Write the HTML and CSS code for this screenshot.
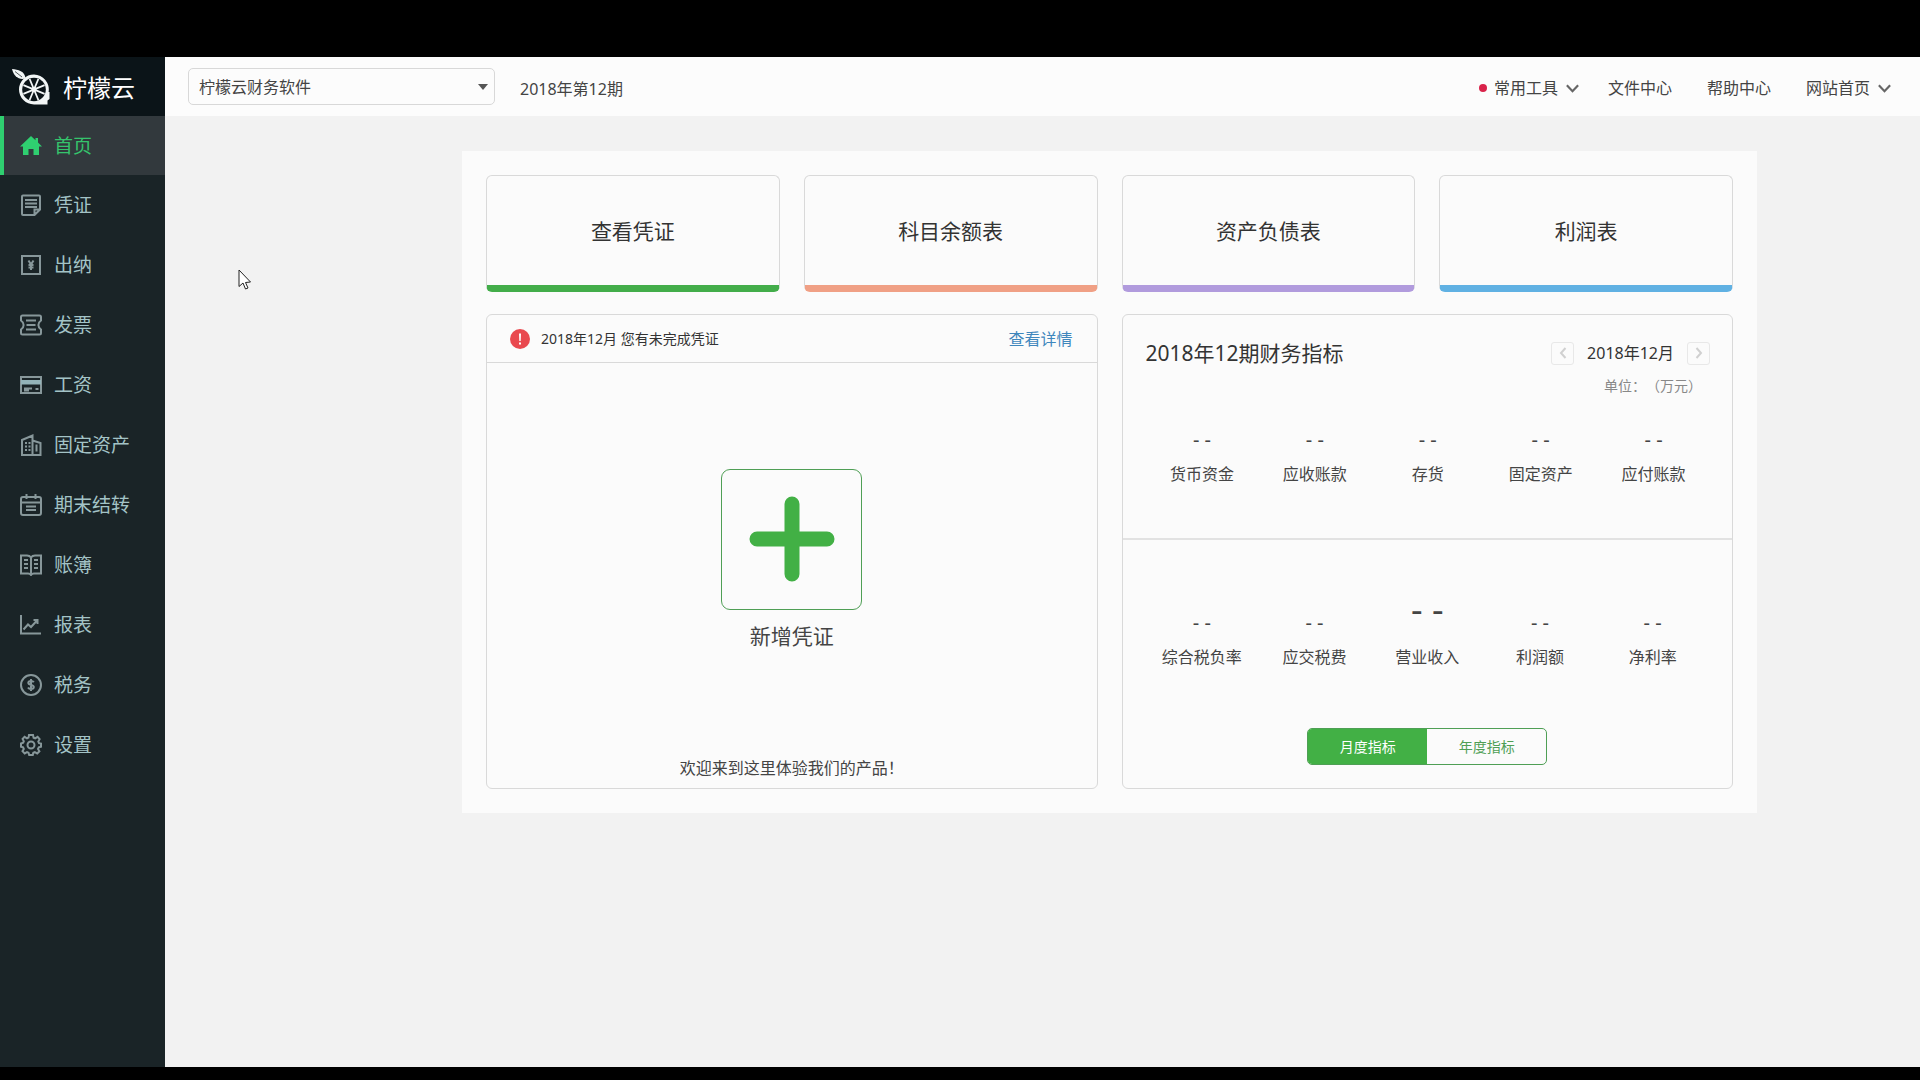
FILE: index.html
```
<!DOCTYPE html>
<html lang="zh-CN">
<head>
<meta charset="utf-8">
<title>柠檬云财务软件</title>
<link rel="stylesheet" href="styles.css">
</head>
<body>
<div class="app">
  <aside class="sidebar">
    <a class="brand" href="#">
      <svg class="brand-logo" viewBox="0 0 38 38" aria-hidden="true">
        <path fill="#f2f6f6" d="M0 0C6 .5 13 2 13.500 9.500 7 11.500 1.500 7 0 0Z"/>
        <path fill="none" stroke="#0b1418" stroke-width=".7" d="M3 2.500 10 8"/>
        <path fill="#f2f6f6" d="M22 5.500a15 15 0 0 1 14.600 17.500l.9 0V30l-2 1.500V35.500H22a15 15 0 0 1 0-30Z"/>
        <circle cx="22" cy="20.500" r="11.800" fill="#0b1418"/>
        <g stroke="#f2f6f6" stroke-width="1.700">
          <path d="M11.400 16.100 32.600 24.900M17.600 9.900 26.400 31.100M26.400 9.900 17.600 31.100M32.600 16.100 11.400 24.900"/>
        </g>
        <circle cx="22" cy="20.500" r="2.500" fill="#f2f6f6"/>
      </svg>
      <span>柠檬云</span>
    </a>
    <nav class="menu">
      <a class="menu-item active" href="#">
        <svg viewBox="0 0 22 22"><path fill="currentColor" d="M11 1 0 11.500h3V20h5.500v-6h5v6H19v-8.500h3L18 7.600V3h-2.500v2.300Z"/></svg>
        <span>首页</span>
      </a>
      <a class="menu-item" href="#">
        <svg viewBox="0 0 22 22"><path d="M3 1.500h16c.6 0 1 .4 1 1v13L14.500 21H3c-.6 0-1-.4-1-1V2.500c0-.6.4-1 1-1ZM20 15.500h-5.500V21M5 6h12M5 9.500h12M5 13h12"/></svg>
        <span>凭证</span>
      </a>
      <a class="menu-item" href="#">
        <svg viewBox="0 0 22 22"><path d="M2 2h18v18H2ZM8.500 6.500 11 10.500l2.500-4M11 10.500V16M8.500 11h5M8.500 13.500h5"/></svg>
        <span>出纳</span>
      </a>
      <a class="menu-item" href="#">
        <svg viewBox="0 0 22 22"><path d="M2.500 1.500h17c1 0 1.500.5 1.500 1.500v3.500c-3.500 2.500-3.500 6.500 0 9V19c0 1-.5 1.500-1.500 1.500h-17C1.500 20.500 1 20 1 19v-3.500c3.500-2.500 3.500-6.500 0-9V3c0-1 .5-1.500 1.500-1.500ZM6 6.500h10M6.500 11h9M6 15.500h10"/></svg>
        <span>发票</span>
      </a>
      <a class="menu-item" href="#">
        <svg viewBox="0 0 22 22"><path d="M1 3h20v16H1ZM4 14.500h8M4 16.500h5M15.500 15h3"/><path fill="currentColor" stroke="none" d="M1 6h20v4.500H1Z"/></svg>
        <span>工资</span>
      </a>
      <a class="menu-item" href="#">
        <svg viewBox="0 0 22 22"><path d="M2 21V6l10.500-4.500V21ZM12.500 6.500 20.500 9v12h-8.500M5 9h2M5 12.500h2M5 16h2M8.500 9h2M8.500 12.500h2M8.500 16h2M16.500 10.500v7"/></svg>
        <span>固定资产</span>
      </a>
      <a class="menu-item" href="#">
        <svg viewBox="0 0 22 22"><path d="M3 3h16c1 0 2 .8 2 2v14c0 1.200-1 2-2 2H3c-1 0-2-.8-2-2V5c0-1.200 1-2 2-2ZM1 8.500h20M6.500 0v5M15.500 0v5M6 12.500h10M6 16h10"/></svg>
        <span>期末结转</span>
      </a>
      <a class="menu-item" href="#">
        <svg viewBox="0 0 22 22"><path d="M11 3.500C10 2 9 1.500 7 1.500H1v18h7c1.500 0 2.500.5 3 1.500.5-1 1.500-1.500 3-1.500h7v-18h-6c-2 0-3 .5-4 2ZM11 3.500V21M4 6h4M4 10h4M4 14h4M14 6h4M14 10h4M14 14h4"/></svg>
        <span>账簿</span>
      </a>
      <a class="menu-item" href="#">
        <svg viewBox="0 0 22 22"><path d="M1 1v18.500h20M3.500 15.500 8 10.500l3 2.500 6-6.500M13.500 6H17.500V10"/></svg>
        <span>报表</span>
      </a>
      <a class="menu-item" href="#">
        <svg viewBox="0 0 22 22"><circle cx="11" cy="11" r="10"/><path stroke-width="2" d="M13.800 8.200c-.6-1-1.500-1.300-2.800-1.300-1.600 0-2.700.7-2.700 1.900 0 2.900 5.500 1.300 5.500 4.300 0 1.300-1.200 2-2.800 2-1.400 0-2.400-.5-3-1.500M11 5v12"/></svg>
        <span>税务</span>
      </a>
      <a class="menu-item" href="#">
        <svg viewBox="0 0 22 22"><circle cx="11" cy="11" r="3.500"/><path d="M9 1h4l.6 2.700 1.600.7 2.400-1.500 2 2.200-1.300 2.500.7 1.600L21 9.500v3.200l-2.200.6-.8 1.700 1.400 2.300-2.200 2.200-2.400-1.300-1.500.6L12.800 21H9.200l-.7-2.300-1.500-.6-2.300 1.300-2.200-2.200L3.800 15l-.7-1.700L1 12.700V9.500l2.200-.8.6-1.500L2.600 4.900l2-2.100L7 4.300l1.500-.7Z"/></svg>
        <span>设置</span>
      </a>
    </nav>
  </aside>

  <div class="content">
    <header class="topbar">
      <div class="company">
        <select class="company-select" aria-label="账套">
          <option>柠檬云财务软件</option>
        </select>
      </div>
      <span class="period">2018年第12期</span>
      <nav class="tools">
        <button class="tool tool-menu" type="button"><i class="dot"></i>常用工具<svg class="chevron" viewBox="0 0 12 8"><path d="M.8 1 6 6.500 11.200 1"/></svg></button>
        <a class="tool" href="#">文件中心</a>
        <a class="tool" href="#">帮助中心</a>
        <button class="tool" type="button">网站首页<svg class="chevron" viewBox="0 0 12 8"><path d="M.8 1 6 6.500 11.200 1"/></svg></button>
      </nav>
    </header>

    <main class="workspace">
      <div class="dashboard">
        <a class="shortcut green" href="#">查看凭证</a>
        <a class="shortcut orange" href="#">科目余额表</a>
        <a class="shortcut purple" href="#">资产负债表</a>
        <a class="shortcut blue" href="#">利润表</a>

        <section class="card voucher">
          <div class="notice">
            <svg class="notice-icon" viewBox="0 0 20 20"><circle cx="10" cy="10" r="10" fill="#e9494f"/><path fill="#fff" d="M9 4.500h2l-.3 7.500H9.300ZM9 13.500h2v2H9Z"/></svg>
            <span class="notice-text">2018年12月 您有未完成凭证</span>
            <a class="notice-link" href="#">查看详情</a>
          </div>
          <div class="create">
            <button class="create-button" type="button" aria-labelledby="create-label">
              <svg viewBox="0 0 86 86"><path d="M43 8v70M8 43h70"/></svg>
            </button>
            <span class="create-label" id="create-label">新增凭证</span>
          </div>
          <p class="welcome">欢迎来到这里体验我们的产品！</p>
        </section>

        <section class="card indicators">
          <div class="summary">
            <div class="summary-head">
              <h2>2018年12期财务指标</h2>
              <div class="month">
                <div class="month-nav">
                  <button class="step" type="button" aria-label="上个月"><svg viewBox="0 0 8 12"><path d="M6.500 1 2 6l4.500 5"/></svg></button>
                  <span>2018年12月</span>
                  <button class="step" type="button" aria-label="下个月"><svg viewBox="0 0 8 12"><path d="M1.500 1 6 6l-4.500 5"/></svg></button>
                </div>
                <span class="unit">单位：（万元）</span>
              </div>
            </div>
            <dl class="metrics">
              <div><dd>- -</dd><dt>货币资金</dt></div>
              <div><dd>- -</dd><dt>应收账款</dt></div>
              <div><dd>- -</dd><dt>存货</dt></div>
              <div><dd>- -</dd><dt>固定资产</dt></div>
              <div><dd>- -</dd><dt>应付账款</dt></div>
            </dl>
          </div>
          <div class="profit">
            <dl class="metrics">
              <div><dd>- -</dd><dt>综合税负率</dt></div>
              <div><dd>- -</dd><dt>应交税费</dt></div>
              <div><dd class="major">- -</dd><dt>营业收入</dt></div>
              <div><dd>- -</dd><dt>利润额</dt></div>
              <div><dd>- -</dd><dt>净利率</dt></div>
            </dl>
            <div class="switch">
              <button class="on" type="button">月度指标</button>
              <button type="button">年度指标</button>
            </div>
          </div>
        </section>
      </div>
    </main>
  </div>
</div>
<svg class="pointer" viewBox="0 0 14 21" aria-hidden="true"><path fill="#fff" stroke="#222" d="M1 1v16.500l4-3.500 2.500 6 2.500-1-2.500-5.500 5-.5Z"/></svg>
</body>
</html>
```
FILE: styles.css
```
* {
  box-sizing: border-box;
}

body {
  margin: 0;
  min-height: 100vh;
  padding: 57px 0 13px;
  display: flex;
  background: #000;
  color: #444;
  font-family: "Noto Sans", "Noto Sans CJK SC", sans-serif;
  font-size: 16px;
  line-height: 24px;
}

a {
  color: inherit;
  text-decoration: none;
}

button {
  margin: 0;
  padding: 0;
  border: 0;
  background: none;
  color: inherit;
  font: inherit;
}

.app {
  flex: 1;
  display: flex;
}

/* Sidebar */

.sidebar {
  flex: 0 0 165px;
  background: #1a2427;
}

.brand {
  height: 59px;
  padding: 2px 0 0 12px;
  display: flex;
  align-items: center;
  gap: 13px;
  background: #0b1418;
  color: #fff;
  font-size: 24px;
}

.brand-logo {
  width: 38px;
  height: 38px;
}

.menu-item {
  height: 60px;
  padding-left: 20px;
  display: flex;
  align-items: center;
  gap: 12px;
  color: #a3c3c6;
  font-size: 19px;
}

.menu-item svg {
  width: 22px;
  height: 22px;
  fill: none;
  stroke: #87979a;
  stroke-width: 2;
  color: #93b3b8;
}

.menu-item.active {
  height: 59px;
  padding-left: 16px;
  border-left: 4px solid #2fcf70;
  background: #32393d;
  color: #35c46c;
}

.menu-item.active svg {
  color: #2fcf70;
  stroke: none;
}

/* Top bar */

.content {
  flex: 1;
  background: #f2f2f2;
}

.topbar {
  height: 59px;
  padding: 0 29px 0 23px;
  display: flex;
  align-items: center;
  background: #fcfcfc;
}

.company {
  position: relative;
  width: 307px;
}

.company::after {
  content: "";
  position: absolute;
  right: 7px;
  top: 16px;
  border: 5px solid transparent;
  border-top: 6px solid #555;
  border-bottom: 0;
  pointer-events: none;
}

.company-select {
  width: 100%;
  height: 37px;
  padding: 0 28px 0 10px;
  appearance: none;
  border: 1px solid #d8d8d8;
  border-radius: 5px;
  background: #fcfcfc;
  color: #444;
  font: inherit;
}

.period {
  padding: 4px 0 0 25px;
}

.tools {
  margin-left: auto;
  padding-top: 3px;
  display: flex;
  gap: 35px;
}

.tool {
  display: flex;
  align-items: center;
}

.tool-menu {
  margin-right: -6px;
}

.dot {
  width: 8px;
  height: 8px;
  margin-right: 7px;
  border-radius: 50%;
  background: #d9234a;
}

.chevron {
  width: 13px;
  height: 9px;
  margin-left: 8px;
  fill: none;
  stroke: #666;
  stroke-width: 2;
}

/* Dashboard */

.workspace {
  padding: 35px 163px 24px 297px;
}

.dashboard {
  padding: 24px;
  display: grid;
  grid-template-columns: repeat(4, 1fr);
  gap: 22px 24px;
  background: #fbfbfb;
}

.shortcut {
  height: 117px;
  padding-top: 1px;
  display: flex;
  align-items: center;
  justify-content: center;
  border: 1px solid #d9d9d9;
  border-bottom: 7px solid;
  border-radius: 6px;
  color: #333;
  font-size: 21px;
}

.green { border-bottom-color: #43ad4a; }
.orange { border-bottom-color: #f0a085; }
.purple { border-bottom-color: #b19bdd; }
.blue { border-bottom-color: #60b1e3; }

.card {
  grid-column: span 2;
  display: flex;
  flex-direction: column;
  border: 1px solid #d9d9d9;
  border-radius: 6px;
}

/* Voucher card */

.notice {
  height: 48px;
  padding: 0 24px 0 23px;
  display: flex;
  align-items: center;
  gap: 11px;
  border-bottom: 1px solid #d9d9d9;
}

.notice-icon {
  width: 20px;
  height: 20px;
}

.notice-text {
  color: #333;
  font-size: 14px;
}

.notice-link {
  margin-left: auto;
  color: #3f87bd;
}

.create {
  flex: 1;
  display: flex;
  flex-direction: column;
  align-items: center;
  justify-content: center;
  gap: 11px;
}

.create-button {
  width: 141px;
  height: 141px;
  display: flex;
  align-items: center;
  justify-content: center;
  border: 1px solid #4f9f55;
  border-radius: 9px;
}

.create-button svg {
  width: 86px;
  height: 86px;
  stroke: #42b045;
  stroke-width: 15;
  stroke-linecap: round;
}

.create-label {
  font-size: 21px;
  line-height: 30px;
}

.welcome {
  margin: 0 0 8px;
  text-align: center;
}

/* Indicator card */

.summary {
  height: 225px;
  padding: 26px 22px 0 23px;
  border-bottom: 2px solid #e2e2e2;
}

.summary-head {
  display: flex;
  justify-content: space-between;
}

h2 {
  margin: 0;
  color: #333;
  font-size: 21px;
  font-weight: 400;
}

.month {
  display: flex;
  flex-direction: column;
  align-items: flex-end;
  gap: 9px;
}

.month-nav {
  display: flex;
  align-items: center;
  gap: 13px;
  color: #333;
}

.step {
  width: 23px;
  height: 23px;
  display: flex;
  align-items: center;
  justify-content: center;
  border: 1px solid #e8e8e8;
  border-radius: 3px;
}

.step svg {
  width: 8px;
  height: 12px;
  fill: none;
  stroke: #d0d0d0;
  stroke-width: 2;
}

.unit {
  padding-right: 8px;
  color: #888;
  font-size: 14px;
  text-spacing-trim: space-all;
}

.metrics {
  margin: 0;
  display: grid;
  grid-template-columns: repeat(5, 1fr);
  align-items: end;
  text-align: center;
}

.summary .metrics {
  margin-top: 30px;
}

.metrics dd {
  margin: 0 0 10px;
  font-size: 20px;
}

.metrics div {
  display: flex;
  flex-direction: column;
}

.metrics .major {
  margin-bottom: 18px;
  font-size: 36px;
  line-height: 36px;
}

.profit {
  padding: 51px 23px 23px;
  display: flex;
  flex-direction: column;
  align-items: center;
  gap: 59px;
}

.profit .metrics {
  align-self: stretch;
}

.switch {
  width: 240px;
  height: 37px;
  display: flex;
  overflow: hidden;
  border: 1px solid #4f9f55;
  border-radius: 5px;
}

.switch button {
  flex: 1;
  color: #4f9f55;
  font-size: 14px;
}

.switch .on {
  background: #42b045;
  color: #fff;
}

.pointer {
  position: absolute;
  left: 238px;
  top: 269px;
  width: 14px;
  height: 21px;
}
```
